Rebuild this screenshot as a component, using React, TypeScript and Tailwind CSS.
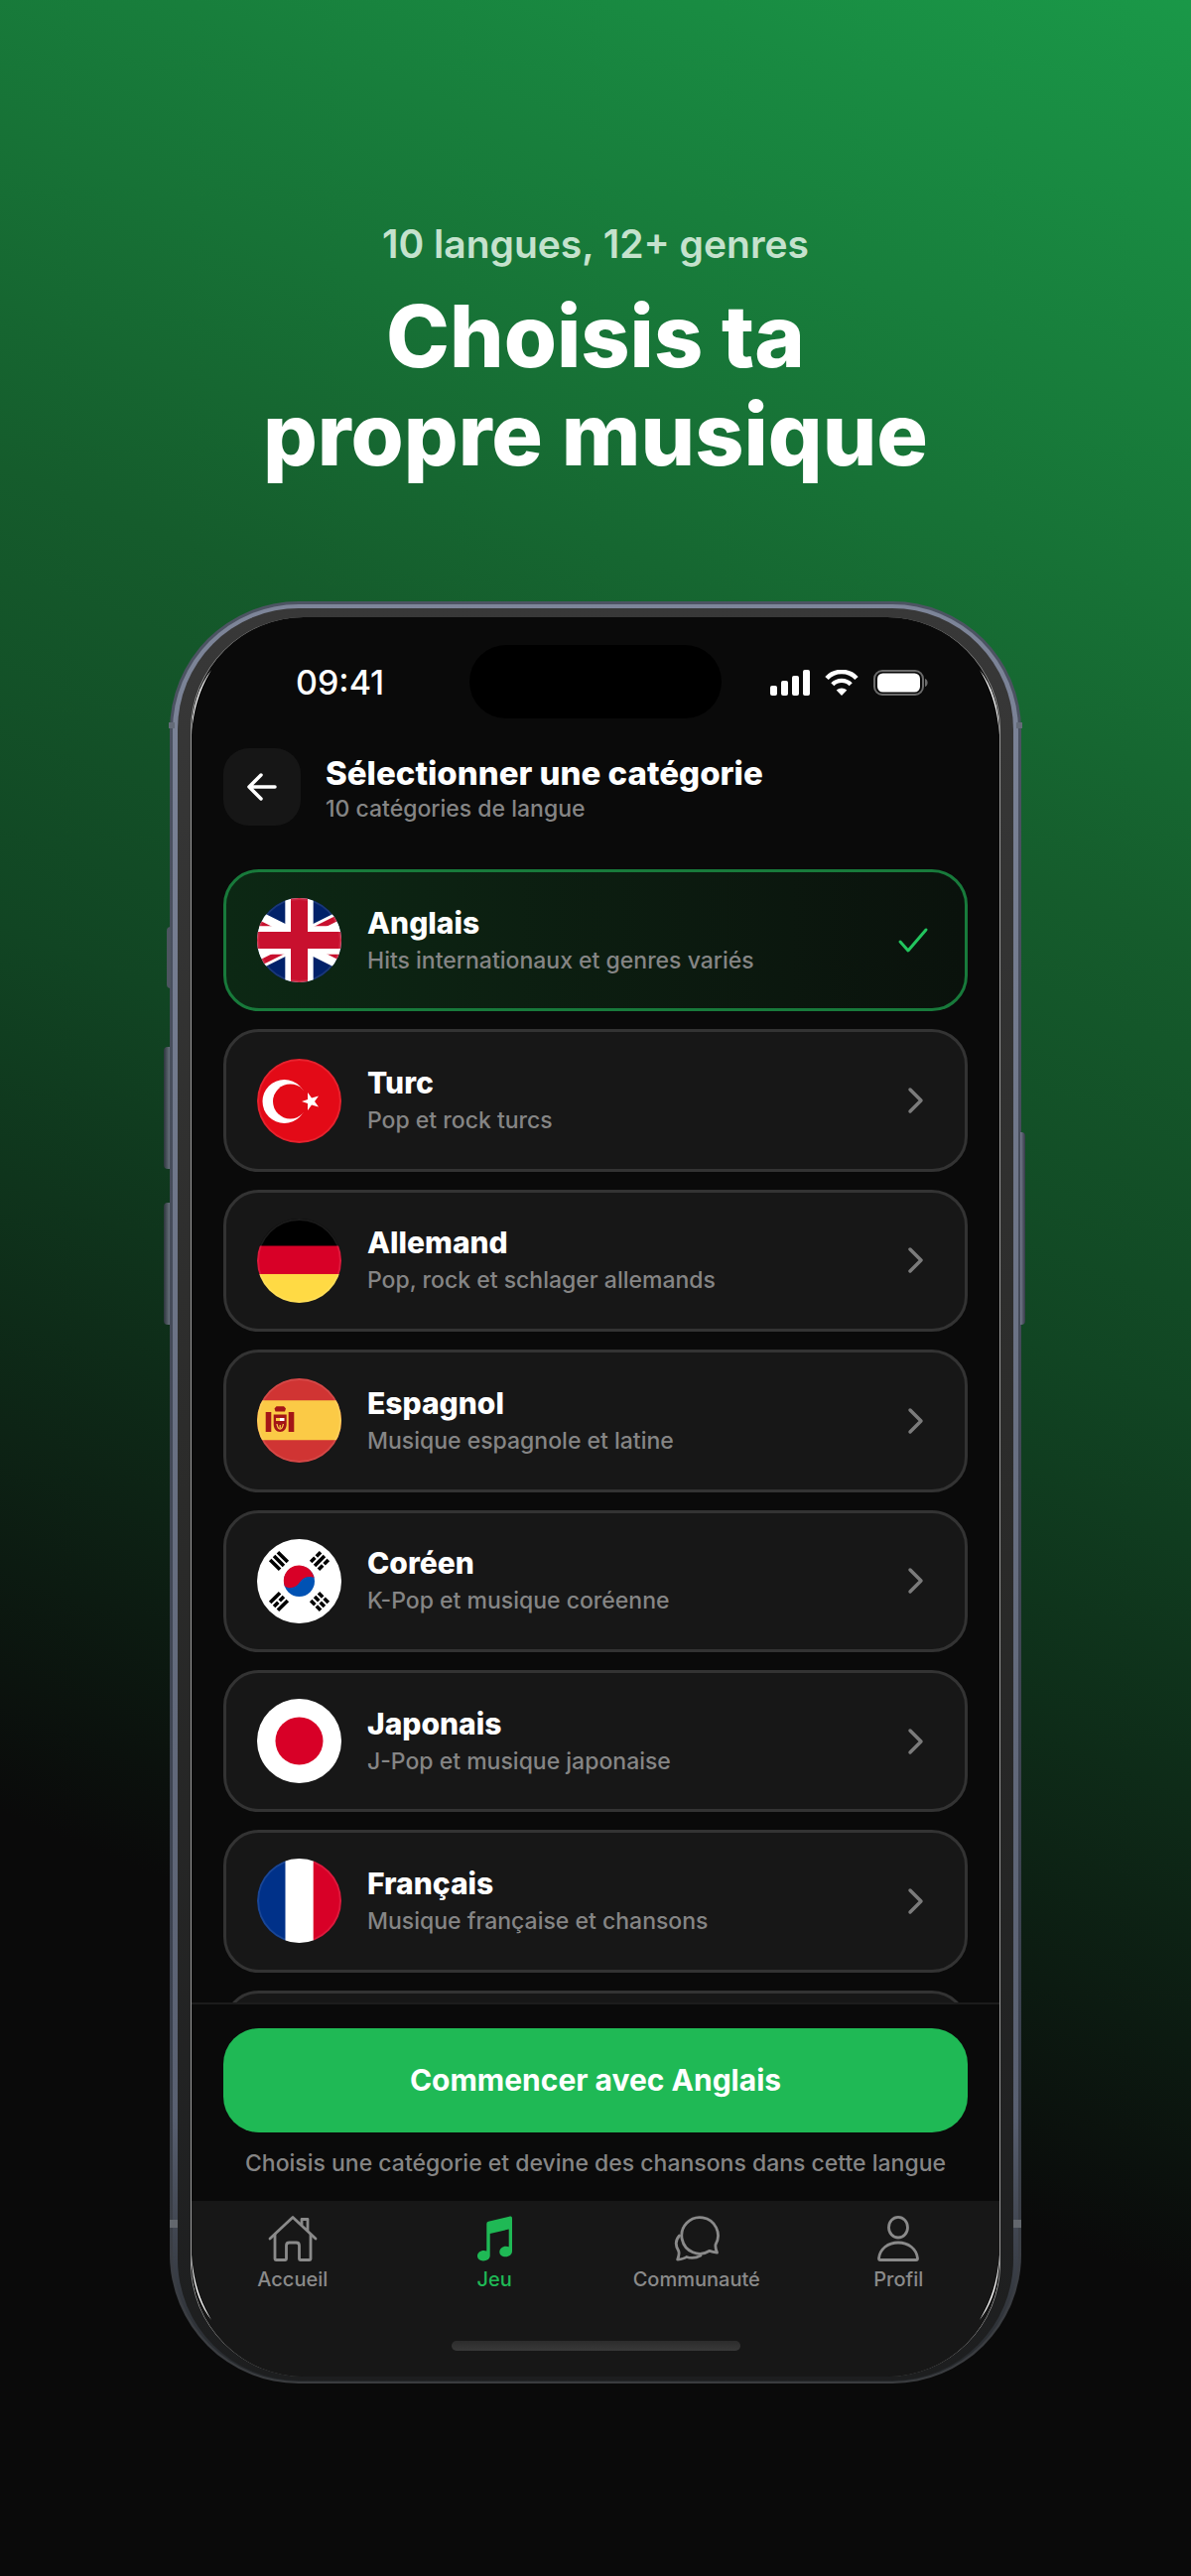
import type { ReactNode } from 'react';

type Language = { name: string; detail: string; flag: ReactNode };

const star = 'M45 43 L51 41 L51 34 L55 39.5 L62 37.5 L58 43 L62 48.5 L55 46.5 L51 52 L51 45 Z';

function Flag({ children }: { children: ReactNode }) {
  return (
    <span className="relative block size-[85px] shrink-0 overflow-hidden rounded-full after:absolute after:inset-0 after:rounded-full after:border-2 after:border-white/10">
      <svg viewBox="0 0 85 85" className="block size-full" aria-hidden="true">
        {children}
      </svg>
    </span>
  );
}

const unitedKingdom = (
  <svg viewBox="15 0 30 30" width="85" height="85">
    <defs>
      <clipPath id="uk-diagonals">
        <path d="M30 15h30v15zv15H0zH0V0zV0h30z" />
      </clipPath>
    </defs>
    <path d="M0 0h60v30H0z" fill="#012169" />
    <path d="M0 0l60 30M60 0L0 30" stroke="#fff" strokeWidth="6" />
    <path d="M0 0l60 30M60 0L0 30" stroke="#c8102e" strokeWidth="4" clipPath="url(#uk-diagonals)" />
    <path d="M30 0v30M0 15h60" stroke="#fff" strokeWidth="10" />
    <path d="M30 0v30M0 15h60" stroke="#c8102e" strokeWidth="6" />
  </svg>
);

const turkey = (
  <>
    <path d="M0 0h85v85H0z" fill="#e30a17" />
    <circle cx="27.500" cy="43" r="22" fill="#fff" />
    <circle cx="33.500" cy="43" r="17.500" fill="#e30a17" />
    <path d={star} fill="#fff" />
  </>
);

const germany = (
  <>
    <path d="M0 0h85v28H0z" fill="#000" />
    <path d="M0 27.500h85v29H0z" fill="#d80027" />
    <path d="M0 56h85v29H0z" fill="#ffda44" />
  </>
);

const spain = (
  <>
    <path d="M0 0h85v85H0z" fill="#d03433" />
    <path d="M0 22.300h85v40H0z" fill="#fbca46" />
    <path d="M8.700 34h5.600v20H8.700zM31.700 34h5.600v20h-5.600z" fill="#a41517" />
    <path d="M19.500 28.300h7.500l2 2.200-1 3h-9.500l-1-3z" fill="#a41517" />
    <path d="M16.700 36.500h13v10c0 4-2.500 7.500-6.500 7.500s-6.500-3.500-6.500-7.500z" fill="#a41517" />
    <path d="M19.500 40h8v3h-8z" fill="#fff" />
    <path d="M19 40h4v3h-4z" fill="#fbca46" />
    <path d="M20 46c.5 3 1.500 5 3.200 5s2.700-2 3.200-5M23.200 47v3" fill="none" stroke="#fbca46" strokeWidth="1.300" />
  </>
);

const korea = (
  <>
    <path d="M0 0h85v85H0z" fill="#fff" />
    <circle cx="42.500" cy="42.500" r="15.500" fill="#0052b4" />
    <path d="M27.800 47.500C33 51 39.500 49 43 43.500S53 37 57.500 39A15.500 15.500 0 1 0 27.800 47.500z" fill="#d80027" />
    <g stroke="#000" strokeWidth="3.600" fill="none">
      <path transform="translate(22 22) rotate(45)" d="M-7-5.500H7M-7 0H7M-7 5.500H7" />
      <path transform="translate(63 22) rotate(-45)" d="M-7-5.500h6M1-5.500h6M-7 0H7M-7 5.500h6M1 5.500h6" />
      <path transform="translate(22 63) rotate(-45)" d="M-7-5.500H7M-7 0h6M1 0h6M-7 5.500H7" />
      <path transform="translate(63 63) rotate(45)" d="M-7-5.500h6M1-5.500h6M-7 0h6M1 0h6M-7 5.500h6M1 5.500h6" />
    </g>
  </>
);

const japan = (
  <>
    <path d="M0 0h85v85H0z" fill="#fff" />
    <circle cx="42.500" cy="42.500" r="24" fill="#d80027" />
  </>
);

const france = (
  <>
    <path d="M0 0h29v85H0z" fill="#003189" />
    <path d="M28.500 0h29v85h-29z" fill="#fff" />
    <path d="M56.700 0H85v85H56.700z" fill="#d80027" />
  </>
);

const italy = (
  <>
    <path d="M0 0h29v85H0z" fill="#009246" />
    <path d="M28.500 0h29v85h-29z" fill="#fff" />
    <path d="M56.700 0H85v85H56.700z" fill="#ce2b37" />
  </>
);

const languages: Language[] = [
  { name: 'Anglais', detail: 'Hits internationaux et genres variés', flag: unitedKingdom },
  { name: 'Turc', detail: 'Pop et rock turcs', flag: turkey },
  { name: 'Allemand', detail: 'Pop, rock et schlager allemands', flag: germany },
  { name: 'Espagnol', detail: 'Musique espagnole et latine', flag: spain },
  { name: 'Coréen', detail: 'K-Pop et musique coréenne', flag: korea },
  { name: 'Japonais', detail: 'J-Pop et musique japonaise', flag: japan },
  { name: 'Français', detail: 'Musique française et chansons', flag: france },
];

function LanguageCard({ language, selected }: { language: Language; selected: boolean }) {
  return (
    <button
      type="button"
      aria-pressed={selected}
      className={
        selected
          ? 'flex w-full items-center gap-[26px] rounded-[36px] border-[3px] border-[#187a3b] bg-linear-to-r from-[#0c2814] to-[#0a120c] px-[31px] text-left'
          : 'flex w-full items-center gap-[26px] rounded-[36px] border-[3px] border-[#333333] bg-[#171717] px-[31px] text-left'
      }
    >
      <Flag>{language.flag}</Flag>
      <span className="flex min-w-0 flex-1 flex-col pt-[2px]">
        <span className="text-[30px] leading-[38px] font-extrabold text-white">{language.name}</span>
        <span className="text-[23px] leading-[38px] font-medium text-[#858585]">{language.detail}</span>
      </span>
      {selected ? (
        <svg viewBox="0 0 40 40" className="size-10 shrink-0" fill="none" stroke="#22c55e" strokeWidth="3" strokeLinecap="round" strokeLinejoin="round" aria-hidden="true">
          <path d="M6 21l8 9L32 9" />
        </svg>
      ) : (
        <svg viewBox="0 0 40 40" className="size-10 shrink-0" fill="none" stroke="#7b7b7b" strokeWidth="3.500" strokeLinecap="round" strokeLinejoin="round" aria-hidden="true">
          <path d="M16 9l11 11L16 31" />
        </svg>
      )}
    </button>
  );
}

function StatusIcons() {
  return (
    <div className="flex items-center gap-[15px]">
      <svg viewBox="0 0 40 26" className="h-[26px] w-10" fill="#fff" aria-label="Réseau">
        <rect x="0" y="16" width="7" height="10" rx="2" />
        <rect x="11" y="11" width="7" height="15" rx="2" />
        <rect x="22" y="6" width="7" height="20" rx="2" />
        <rect x="33" y="0" width="7" height="26" rx="2" />
      </svg>
      <svg viewBox="0 0 34 26" className="h-[26px] w-[34px]" aria-label="Wi-Fi">
        <path d="M2 8.500C10-.2 24-.2 32 8.500" fill="none" stroke="#fff" strokeWidth="4.600" />
        <path d="M7.800 14.800c5-5.300 13.400-5.300 18.400 0" fill="none" stroke="#fff" strokeWidth="4.300" />
        <path d="M17 26l-5.300-5.600c3-2.700 7.600-2.700 10.600 0z" fill="#fff" />
      </svg>
      <svg viewBox="0 0 56 26" className="h-[26px] w-14" aria-label="Batterie">
        <rect x="1" y="1" width="49" height="24" rx="8" fill="none" stroke="#6b6b6b" strokeWidth="2" />
        <rect x="4" y="3.500" width="43" height="19" rx="5.500" fill="#fff" />
        <path d="M52 9c3.500 1 3.500 7 0 8z" fill="#6b6b6b" />
      </svg>
    </div>
  );
}

const homeIcon = (
  <g fill="none" stroke="currentColor" strokeWidth="2.800" strokeLinecap="round" strokeLinejoin="round">
    <path d="M2 24L25 2.500 48 24M34 10.500V4.500h6V16" />
    <path d="M7 20v24.500q0 1 1 1h9.500q1 0 1-1V31q0-3 3-3h7q3 0 3 3v13.500q0 1 1 1H42q1 0 1-1V20" />
  </g>
);

const musicIcon = (
  <path
    fill="currentColor"
    d="M43 3.500v33.300c0 3-3 5.500-6.500 5.500-3.700 0-6.200-2-6.200-4.900 0-3 2.700-5.700 6.500-5.700 1 0 2 .2 2.900.6V14.500L20.700 19v22.300c0 3-3 5.200-6.700 5.200-3.600 0-6-2-6-4.900 0-3.200 2.800-5.600 6.400-5.600 1 0 2 .2 2.900.6V9q0-1.700 1.700-2.200L41 1.600q2-.5 2 1.900z"
  />
);

const chatIcon = (
  <g fill="none" stroke="currentColor" strokeWidth="2.800" strokeLinecap="round" strokeLinejoin="round">
    <path d="M44 30A18.300 18.300 0 1 0 38 36.300Q41 37.300 45.500 38 43.500 33.500 44 30z" />
    <path d="M7.500 21C3 26 3.500 31 6.500 36q1.500 3-.8 9 6.300-.5 9-2.500Q22 45 29 41" />
  </g>
);

const profileIcon = (
  <g fill="none" stroke="currentColor" strokeWidth="2.800" strokeLinejoin="round">
    <ellipse cx="25" cy="12.700" rx="9.500" ry="10.300" />
    <path d="M5.500 44C6.500 34 15 28 25 28s18.500 6 19.500 16q0 1.500-1.500 1.500H7q-1.500 0-1.500-1.500z" />
  </g>
);

const tabs = [
  { label: 'Accueil', icon: homeIcon, active: false },
  { label: 'Jeu', icon: musicIcon, active: true },
  { label: 'Communauté', icon: chatIcon, active: false },
  { label: 'Profil', icon: profileIcon, active: false },
];

function PhoneButtons() {
  return (
    <>
      <span className="absolute top-[328px] -left-[3px] h-[62px] w-1 rounded-l-sm bg-[#4d5560]" />
      <span className="absolute top-[449px] -left-[6px] h-[123px] w-[6px] rounded-l-sm bg-linear-to-r from-[#2f363e] to-[#68717c]" />
      <span className="absolute top-[606px] -left-[6px] h-[123px] w-[6px] rounded-l-sm bg-linear-to-r from-[#2f363e] to-[#68717c]" />
      <span className="absolute top-[535px] -right-[4px] h-[194px] w-[5px] rounded-r-sm bg-linear-to-r from-[#747a8c] to-[#363b48]" />
    </>
  );
}

function AntennaBands() {
  return (
    <>
      <span className="absolute top-[122px] -left-px h-[6px] w-[6px] bg-[#646b78]" />
      <span className="absolute top-[122px] -right-px h-[6px] w-[6px] bg-[#646b78]" />
      <span className="absolute bottom-[157px] left-0 h-2 w-2 bg-[#63676d]" />
      <span className="absolute right-0 bottom-[157px] h-2 w-2 bg-[#63676d]" />
    </>
  );
}

function EdgeGlints() {
  const glint = 'M0 66C0 38 8 15 20 0 10 17 2 36 0 66z';
  return (
    <>
      <svg viewBox="0 0 20 66" className="absolute top-[53px] left-0 h-[66px] w-5" aria-hidden="true">
        <path d={glint} fill="#fff" />
      </svg>
      <svg viewBox="0 0 20 66" className="absolute top-[53px] right-0 h-[66px] w-5 -scale-x-100" aria-hidden="true">
        <path d={glint} fill="#fff" />
      </svg>
      <svg viewBox="0 0 20 66" className="absolute bottom-[57px] left-0 h-[66px] w-5 -scale-y-100" aria-hidden="true">
        <path d={glint} fill="#fff" />
      </svg>
      <svg viewBox="0 0 20 66" className="absolute right-0 bottom-[57px] h-[66px] w-5 -scale-100" aria-hidden="true">
        <path d={glint} fill="#fff" />
      </svg>
    </>
  );
}

export default function App() {
  return (
    <main className="flex min-h-screen flex-col items-center bg-[#0a0a0a] bg-[linear-gradient(202deg,#1a9848_0%,#177236_20%,#155c2c_31%,#114523_46%,#0a0a0a_75%)] px-6 pt-[216px] pb-[194px] font-['Inter',sans-serif]">
      <header className="flex flex-col items-center text-center">
        <p className="text-[39px] leading-[60px] font-semibold text-[#c5e2cd]">10 langues, 12+ genres</p>
        <h1 className="mt-[14px] flex flex-col text-[86px] leading-[99px] font-extrabold text-white">
          <span>Choisis ta </span>
          <span>propre musique</span>
        </h1>
      </header>

      <section className="relative mt-[118px] w-full max-w-[858px]" aria-label="Aperçu de l'application">
        <PhoneButtons />
        <div className="rounded-[130px] bg-linear-to-b from-[#4d5463] via-[#3b414e] via-80% to-[#3a3c3f] p-[3px] pb-[2px]">
          <div className="rounded-[127px] bg-linear-to-b from-[#7d8599] via-[#596071] via-85% to-[#24272a] px-[5px] pt-[4px] pb-px">
            <div className="rounded-[122px] bg-linear-to-b from-[#383838] via-[#2b2b2a] to-[#1d1e1f] px-[13px] pt-[9px] pb-[4px]">
              <div className="relative overflow-hidden rounded-[114px] border-x border-[#9a9a9a] bg-[#0a0a0a]">
                <EdgeGlints />

                <div className="grid grid-cols-[1fr_254px_1fr] items-center pt-7">
                  <time className="pt-[2px] pl-[105px] text-[34px] leading-[40px] font-medium text-white">09:41</time>
                  <span className="h-[74px] rounded-full bg-black" />
                  <div className="flex justify-end pt-[2px] pr-[71px]">
                    <StatusIcons />
                  </div>
                </div>

                <div className="mt-[30px] flex items-center gap-[25px] px-8">
                  <button type="button" aria-label="Retour" className="flex size-[78px] shrink-0 items-center justify-center rounded-[26px] bg-[#161616]">
                    <svg viewBox="0 0 32 32" className="size-8" fill="none" stroke="#fff" strokeWidth="3.500" strokeLinecap="round" strokeLinejoin="round" aria-hidden="true">
                      <path d="M29 16H3M15 4L3 16l12 12" />
                    </svg>
                  </button>
                  <div className="pt-[2px]">
                    <h2 className="text-[33px] leading-[42px] font-extrabold text-white">Sélectionner une catégorie</h2>
                    <p className="text-[23px] leading-[30px] font-medium text-[#858585]">10 catégories de langue</p>
                  </div>
                </div>

                <div className="mt-11 h-[1142px] overflow-hidden px-8">
                  <div className="grid min-h-[1273px] auto-rows-fr gap-[18px]">
                    {languages.map((language, index) => (
                      <LanguageCard key={language.name} language={language} selected={index === 0} />
                    ))}
                    <button type="button" aria-label="Italien" className="flex items-center rounded-[36px] border-[3px] border-[#333333] bg-[#171717] px-[31px]">
                      <Flag>{italy}</Flag>
                    </button>
                  </div>
                </div>

                <div className="border-t-2 border-[#1c1c1c] px-8 pt-6 pb-[19px]">
                  <button type="button" className="h-[105px] w-full rounded-[36px] bg-[#1fb955] text-[30px] font-bold text-white">
                    Commencer avec Anglais
                  </button>
                  <p className="mt-3 text-center text-[23px] leading-[38px] font-medium text-[#858585]">
                    Choisis une catégorie et devine des chansons dans cette langue
                  </p>
                </div>

                <nav className="bg-[#171717] pt-[14px] pb-[26px]">
                  <ul className="grid grid-cols-4">
                    {tabs.map((tab) => (
                      <li key={tab.label}>
                        <a
                          href="#"
                          aria-current={tab.active ? 'page' : undefined}
                          className={
                            tab.active
                              ? 'flex flex-col items-center gap-[3px] text-[20px] leading-[28px] font-medium text-[#1fb955]'
                              : 'flex flex-col items-center gap-[3px] text-[20px] leading-[28px] font-medium text-[#8a8a8a]'
                          }
                        >
                          <svg viewBox="0 0 50 48" className="h-12 w-[50px]" aria-hidden="true">
                            {tab.icon}
                          </svg>
                          {tab.label}
                        </a>
                      </li>
                    ))}
                  </ul>
                  <div className="mx-auto mt-12 h-[10px] w-[291px] rounded-full bg-linear-to-b from-[#2c2c2c] to-[#393939]" />
                </nav>
              </div>
            </div>
          </div>
        </div>
        <AntennaBands />
      </section>
    </main>
  );
}
